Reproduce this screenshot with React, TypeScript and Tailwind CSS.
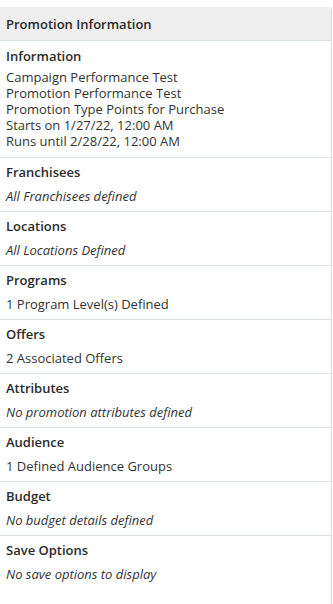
const sections: { title: string; value: string; italic?: boolean }[] = [
  { title: "Franchisees", value: "All Franchisees defined", italic: true },
  { title: "Locations", value: "All Locations Defined", italic: true },
  { title: "Programs", value: "1 Program Level(s) Defined" },
  { title: "Offers", value: "2 Associated Offers" },
  { title: "Attributes", value: "No promotion attributes defined", italic: true },
  { title: "Audience", value: "1 Defined Audience Groups" },
  { title: "Budget", value: "No budget details defined", italic: true },
  { title: "Save Options", value: "No save options to display", italic: true },
];

const info = [
  "Campaign Performance Test",
  "Promotion Performance Test",
  "Promotion Type Points for Purchase",
  "Starts on 1/27/22, 12:00 AM",
  "Runs until 2/28/22, 12:00 AM",
];

export default function App() {
  return (
    <div
      className="min-h-[604px] w-[333px] bg-white pt-[7px] text-[13px] text-[#333]"
      style={{ fontFamily: '"Open Sans", "Noto Sans", sans-serif' }}
    >
      <div className="min-h-[597px] w-[332px] rounded-tr-[3px] border-r border-[#d9d9d9]">
        {/* Header */}
        <div className="flex h-[34px] items-center rounded-tr-[3px] border-b border-[#d6dde4] bg-[#efefef] px-1.5">
          <span className="font-semibold leading-5 text-[#2b2b2b]">Promotion Information</span>
        </div>

        {/* Information */}
        <div className="px-1.5 pb-2 pt-[5px]">
          <div className="font-semibold leading-5 text-[#2b2b2b]">Information</div>
          <div className="mt-[3px] leading-4">
            {info.map((line) => (
              <div key={line}>{line}</div>
            ))}
          </div>
        </div>

        {/* Sections */}
        {sections.map((s) => (
          <div key={s.title} className="border-t border-[#dbe1e7] px-1.5 pb-[5px] pt-1">
            <div className="font-semibold leading-5 text-[#2b2b2b]">{s.title}</div>
            <div className={`mt-1 leading-5 ${s.italic ? "italic" : ""}`}>{s.value}</div>
          </div>
        ))}
      </div>
    </div>
  );
}
